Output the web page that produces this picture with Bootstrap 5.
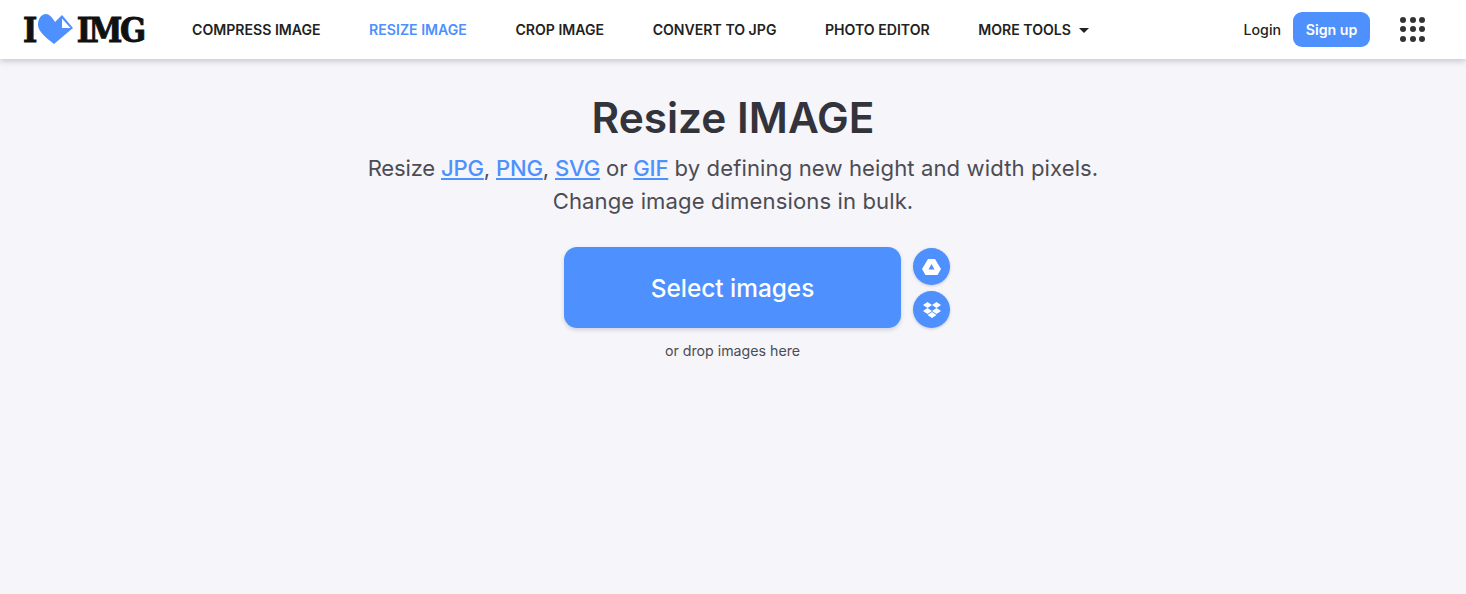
<!doctype html>
<html><head><meta charset="utf-8">
<link href="https://cdn.jsdelivr.net/npm/bootstrap@5.3.0/dist/css/bootstrap.min.css" rel="stylesheet">
<style>
html,body{height:100%}
body{background:#f5f5fa;font-family:Inter,"Liberation Sans",sans-serif;color:#383e45;overflow:hidden}
.topbar{height:59px;background:#fff;box-shadow:0 2px 6px rgba(72,72,100,.28);padding:0 41px 0 23px}
.brand{font-family:"DejaVu Serif Condensed","DejaVu Serif",serif;font-weight:700;font-size:34px;color:#111;width:121px;line-height:1;text-decoration:none;letter-spacing:-2.500px;-webkit-text-stroke:.9px #111}
.heartmark{margin:0 3px 0 3px}
.topnav{margin-left:48px;gap:48.500px}
.topnav a{font-size:14.1px;font-weight:600;color:#222;text-decoration:none;white-space:nowrap}
.topnav a.on{color:#4d90fe}
.caretx{display:inline-block;border:5px solid transparent;border-top:5px solid #222;border-bottom:0;margin-left:8px;vertical-align:2px}
.login{font-size:14.2px;font-weight:500;color:#222;text-decoration:none}
.signup{background:#4d90fe;color:#fff;font-size:14.2px;font-weight:600;border-radius:9px;padding:8px 12px;line-height:19px;border:0;width:77px;margin:-1px 0 0 12px}
.dots{display:grid;grid-template-columns:repeat(3,6px);gap:3.500px;margin-left:30px;margin-top:-1px}
.dots i{width:6px;height:6px;border-radius:50%;background:#333;display:block}
.title{font-size:42.4px;font-weight:600;color:#33333b;line-height:50px;margin:34px 0 9px}
.sub{font-size:22.1px;line-height:32.500px;color:#4c4c54;font-weight:400;margin:0;letter-spacing:.1px}
.leadin{letter-spacing:-.2px}
.sub a{color:#4d90fe;font-weight:500;text-decoration-thickness:2px;text-underline-offset:2px}
.pick{width:337px;height:81px;background:#4d90fe;color:#fff;border-radius:13px;font-size:24.4px;font-weight:500;border:0;padding-top:2px;margin-right:1px;box-shadow:0 2px 4px rgba(72,72,100,.2)}
.cloud{width:37px;height:37px;border-radius:50%;background:#4d90fe;box-shadow:0 1px 3px rgba(72,72,100,.25)}
.picks{margin-top:30px;position:relative}
.side{position:absolute;left:calc(50% + 180px);top:1px;gap:6px}
.hint{font-size:14.2px;color:#4c4c54;margin-top:12px;margin-right:1px}
</style></head><body>
<nav class="topbar d-flex align-items-center">
<a class="brand d-flex align-items-center" href="#"><span>I</span><svg class="heartmark flex-shrink-0" width="36" height="31" viewBox="0 0 36 31"><path d="M17 8C14 3 11 0 8 0 3 0 0 5 0 11 0 18 10 25 16 30L35 14 24 1Z" fill="#4d90fe"/><path d="M24 4.500 32.500 14 24 14Z" fill="#fff"/></svg><span>IMG</span></a>
<div class="topnav d-flex align-items-center">
<a href="#">COMPRESS IMAGE</a><a href="#" class="on">RESIZE IMAGE</a><a href="#">CROP IMAGE</a><a href="#">CONVERT TO JPG</a><a href="#">PHOTO EDITOR</a><a href="#">MORE TOOLS<span class="caretx"></span></a>
</div>
<div class="ms-auto d-flex align-items-center">
<a href="#" class="login">Login</a><button class="signup">Sign up</button>
<div class="dots"><i></i><i></i><i></i><i></i><i></i><i></i><i></i><i></i><i></i></div>
</div>
</nav>
<main class="text-center">
<h1 class="title">Resize IMAGE</h1>
<p class="sub"><span class="leadin">Resize <a href="#">JPG</a>, <a href="#">PNG</a>, <a href="#">SVG</a> or <a href="#">GIF</a></span> by defining new height and width pixels.<br>Change image dimensions in bulk.</p>
<div class="picks d-flex justify-content-center">
<button class="pick">Select images</button>
<div class="side d-flex flex-column">
<div class="cloud d-flex align-items-center justify-content-center"><svg width="19" height="16" viewBox="0 0 19 16"><path fill-rule="evenodd" d="M6 0h7l6 10-3.500 6h-12L0 10zM9.500 5 6.500 10.500h6z" fill="#fff"/></svg></div>
<div class="cloud d-flex align-items-center justify-content-center"><svg width="20" height="18" viewBox="0 0 20 18"><path d="M5.500 1 10 4 5.500 7 1 4z M14.500 1 19 4 14.500 7 10 4z M5.500 7 10 10 5.500 13 1 10z M14.500 7 19 10 14.500 13 10 10z M5.500 14l4.500-3 4.500 3-4.500 3z" fill="#fff"/></svg></div>
</div>
</div>
<div class="hint">or drop images here</div>
</main>
<script src="https://cdn.jsdelivr.net/npm/bootstrap@5.3.0/dist/js/bootstrap.bundle.min.js"></script>
</body></html>
